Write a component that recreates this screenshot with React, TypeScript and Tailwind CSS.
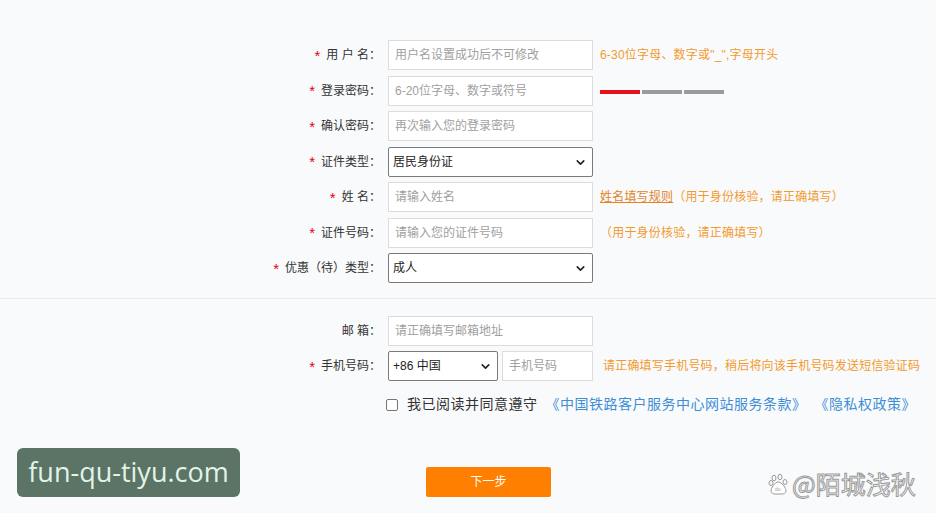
import React from 'react'
import { ChevronDown } from 'lucide-react'

interface RowProps {
  label: string
  required?: boolean
  children: React.ReactNode
  hint?: React.ReactNode
}

const Row: React.FC<RowProps> = ({ label, required = true, children, hint }) => (
  <div className="flex items-center h-[30px]">
    <div className="w-[381px] flex justify-end items-center text-[12px] text-[#333]">
      {required && <span className="text-[#e60012] text-[15px] mr-[6px] leading-none">*</span>}
      <span className="whitespace-pre">{label}</span>
    </div>
    <div className="ml-[7px] w-[205px] h-full flex">{children}</div>
    {hint && <div className="ml-[7px] text-[12px] text-[#f39a2e] whitespace-nowrap tracking-[0.2px]">{hint}</div>}
  </div>
)

const TextBox: React.FC<{ placeholder: string; className?: string }> = ({ placeholder, className = 'w-full' }) => (
  <input
    placeholder={placeholder}
    className={`${className} h-full border border-[#dcdcdc] bg-white px-[6px] text-[12px] text-[#333] placeholder:text-[#a0a0a0] outline-none`}
  />
)

const SelectBox: React.FC<{ value: string; className?: string }> = ({ value, className = 'w-full' }) => (
  <div className={`${className} relative h-full`}>
    <select
      defaultValue={value}
      className="w-full h-full appearance-none border border-[#7a7a7a] rounded-[2px] bg-white pl-[4px] text-[12px] text-[#222] outline-none"
    >
      <option>{value}</option>
    </select>
    <ChevronDown className="absolute right-[6px] top-[9px] h-[13px] w-[13px] text-[#222] pointer-events-none" strokeWidth={3} />
  </div>
)

export default function App() {
  return (
    <div
      className="relative w-full h-[513px] overflow-hidden bg-[#f9fafc]"
      style={{ fontFamily: '"Liberation Sans", "Noto Sans CJK SC", sans-serif' }}
    >
      <div className="pt-[40px] flex flex-col gap-[5.5px]">
        <Row label="用 户 名：" hint={<span>6-30位字母、数字或"_",字母开头</span>}>
          <TextBox placeholder="用户名设置成功后不可修改" />
        </Row>
        <Row
          label="登录密码："
          hint={
            <div className="flex gap-[2px] pt-[2px]">
              <div className="w-[40px] h-[4px] bg-[#e8111b]" />
              <div className="w-[40px] h-[4px] bg-[#9b9b9b]" />
              <div className="w-[40px] h-[4px] bg-[#9b9b9b]" />
            </div>
          }
        >
          <TextBox placeholder="6-20位字母、数字或符号" />
        </Row>
        <Row label="确认密码：">
          <TextBox placeholder="再次输入您的登录密码" />
        </Row>
        <Row label="证件类型：">
          <SelectBox value="居民身份证" />
        </Row>
        <Row
          label="姓 名："
          hint={
            <span>
              <span className="underline text-[#e5831f]">姓名填写规则</span>（用于身份核验，请正确填写）
            </span>
          }
        >
          <TextBox placeholder="请输入姓名" />
        </Row>
        <Row label="证件号码：" hint={<span>（用于身份核验，请正确填写）</span>}>
          <TextBox placeholder="请输入您的证件号码" />
        </Row>
        <Row label="优惠（待）类型：">
          <SelectBox value="成人" />
        </Row>
      </div>

      <div className="mt-[15px] h-px bg-[#e9eaec]" />

      <div className="pt-[17px] flex flex-col gap-[5px]">
        <Row label="邮 箱：" required={false}>
          <TextBox placeholder="请正确填写邮箱地址" />
        </Row>
        <Row label="手机号码：" hint={<span className="ml-[3px]">请正确填写手机号码，稍后将向该手机号码发送短信验证码</span>}>
          <div className="flex gap-[4px] w-full h-full">
            <SelectBox value="+86 中国" className="w-[110px]" />
            <TextBox placeholder="手机号码" className="w-[91px]" />
          </div>
        </Row>
      </div>

      <div className="mt-[13px] pl-[386px] flex items-center text-[14px] tracking-[0.5px]">
        <span className="w-[12px] h-[12px] border border-[#767676] rounded-[2px] bg-white" />
        <span className="ml-[9px] text-[#333]">我已阅读并同意遵守</span>
        <span className="ml-[8px] text-[#3d8ed6]">《中国铁路客户服务中心网站服务条款》</span>
        <span className="ml-[8px] text-[#3d8ed6]">《隐私权政策》</span>
      </div>

      <div className="mt-[52px] pl-[426px]">
        <button className="w-[125px] h-[30px] bg-[#ff8000] rounded-[2px] text-white text-[12px]">下一步</button>
      </div>

      <div className="absolute left-[17px] top-[448px] w-[223px] h-[49px] rounded-[6px] bg-[#5b7466] flex items-center justify-center">
        <span className="text-[27px] text-[#e2f3e8]" style={{ fontFamily: '"Open Sans", sans-serif' }}>fun-qu-tiyu.com</span>
      </div>

      <div className="absolute left-[768px] top-[465px] flex items-center gap-[2px]">
        <svg width="22" height="22" viewBox="0 0 22 22" fill="none" stroke="#9a9a9a" strokeWidth="1">
          <ellipse cx="6" cy="5" rx="2" ry="2.8" />
          <ellipse cx="12" cy="4" rx="2" ry="2.8" />
          <ellipse cx="3" cy="10" rx="2" ry="2.5" />
          <ellipse cx="17" cy="9" rx="2" ry="2.5" />
          <path d="M10 9c-3 0-7 6-7 9 0 2 2 3 4 3h7c2 0 4-1 4-3 0-3-4-9-8-9z" fill="#fff" />
          <text x="7" y="18" fontSize="5" fill="#9a9a9a" stroke="none">du</text>
        </svg>
        <span
          className="text-[25px] text-white [-webkit-text-stroke:1px_#9a9a9a]"
          style={{ fontFamily: '"Noto Sans CJK SC", sans-serif' }}
        >
          @陌城浅秋
        </span>
      </div>
    </div>
  )
}
